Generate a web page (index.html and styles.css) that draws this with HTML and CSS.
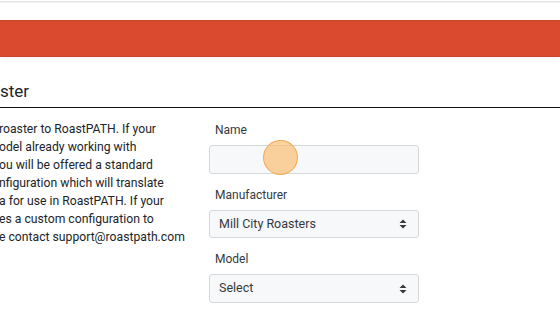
FILE: index.html
```html
<!DOCTYPE html>
<html lang="en">
<head>
    <meta charset="UTF-8">
    <meta name="viewport" content="width=device-width, initial-scale=1.0">
    <title>RoastPATH - Add Roaster</title>
    <link rel="stylesheet" href="styles.css">
</head>
<body>
    <div class="topbar"></div>
    <div class="brandbar"></div>

    <div class="page">
        <h2 class="title">ster</h2>

        <div class="content">
            <p class="intro">
                <span>roaster to RoastPATH. If your</span>
                <span>odel already working with</span>
                <span>ou will be offered a standard</span>
                <span>nfiguration which will translate</span>
                <span>a for use in RoastPATH. If your</span>
                <span>es a custom configuration to</span>
                <span>e contact support@roastpath.com</span>
            </p>

            <form class="roaster-form">
                <div class="form-group">
                    <label>Name</label>
                    <div class="field input"></div>
                    <span class="click-dot"></span>
                </div>
                <div class="form-group">
                    <label>Manufacturer</label>
                    <div class="field select">
                        <span>Mill City Roasters</span>
                        <svg width="8" height="10" viewBox="0 0 8 10"><path d="M4 0.5L7.5 4H0.5z M4 9.5L0.5 6H7.5z" fill="#343a40"/></svg>
                    </div>
                </div>
                <div class="form-group">
                    <label>Model</label>
                    <div class="field select">
                        <span>Select</span>
                        <svg width="8" height="10" viewBox="0 0 8 10"><path d="M4 0.5L7.5 4H0.5z M4 9.5L0.5 6H7.5z" fill="#343a40"/></svg>
                    </div>
                </div>
            </form>
        </div>
    </div>
</body>
</html>
```
FILE: styles.css
```css
* {
    margin: 0;
    padding: 0;
    box-sizing: border-box;
}

body {
    font-family: Roboto, "Liberation Sans", sans-serif;
    font-size: 12px;
    line-height: 1.5;
    color: #212529;
    background: #fff;
    overflow: hidden;
}

.topbar {
    height: 20px;
    border-top: 1px solid #fff;
    box-shadow: inset 0 1px 0 #e4e4e4, inset 0 2px 0 #f0f0f0;
}

.brandbar {
    height: 37px;
    background: #da4a2e;
    border-top: 1px solid #c9452b;
    border-bottom: 1px solid #c9452b;
    box-shadow: 0 2px 4px rgba(0,0,0,0.04);
}

.page {
    padding-top: 24px;
}

.title {
    font-size: 17px;
    font-weight: 400;
    line-height: 1.2;
    padding-bottom: 6px;
    border-bottom: 1px solid #111;
    margin-bottom: 12px;
}

.content {
    display: grid;
    grid-template-columns: 209px 210px;
}

.intro {
    margin-left: -1px;
    font-size: 12.2px;
    line-height: 18px;
}

.intro span {
    display: block;
    white-space: nowrap;
}

.roaster-form {
    padding-top: 1px;
}

.form-group {
    position: relative;
    margin-bottom: 12px;
}

.form-group label {
    display: block;
    padding-left: 6px;
    margin-bottom: 6px;
    color: #343a40;
}

.field {
    height: 28.5px;
    border: 1px solid #d6d9dc;
    border-radius: 3px;
    background: #f7f8f9;
}

.select {
    display: flex;
    align-items: center;
    justify-content: space-between;
    padding: 0 11px 0 9px;
    font-size: 12.5px;
    color: #343a40;
}

.click-dot {
    position: absolute;
    left: 54px;
    top: 19px;
    width: 35px;
    height: 35px;
    border-radius: 50%;
    background: rgba(250, 186, 105, 0.65);
    border: 1px solid rgba(236, 160, 70, 0.8);
}
```
